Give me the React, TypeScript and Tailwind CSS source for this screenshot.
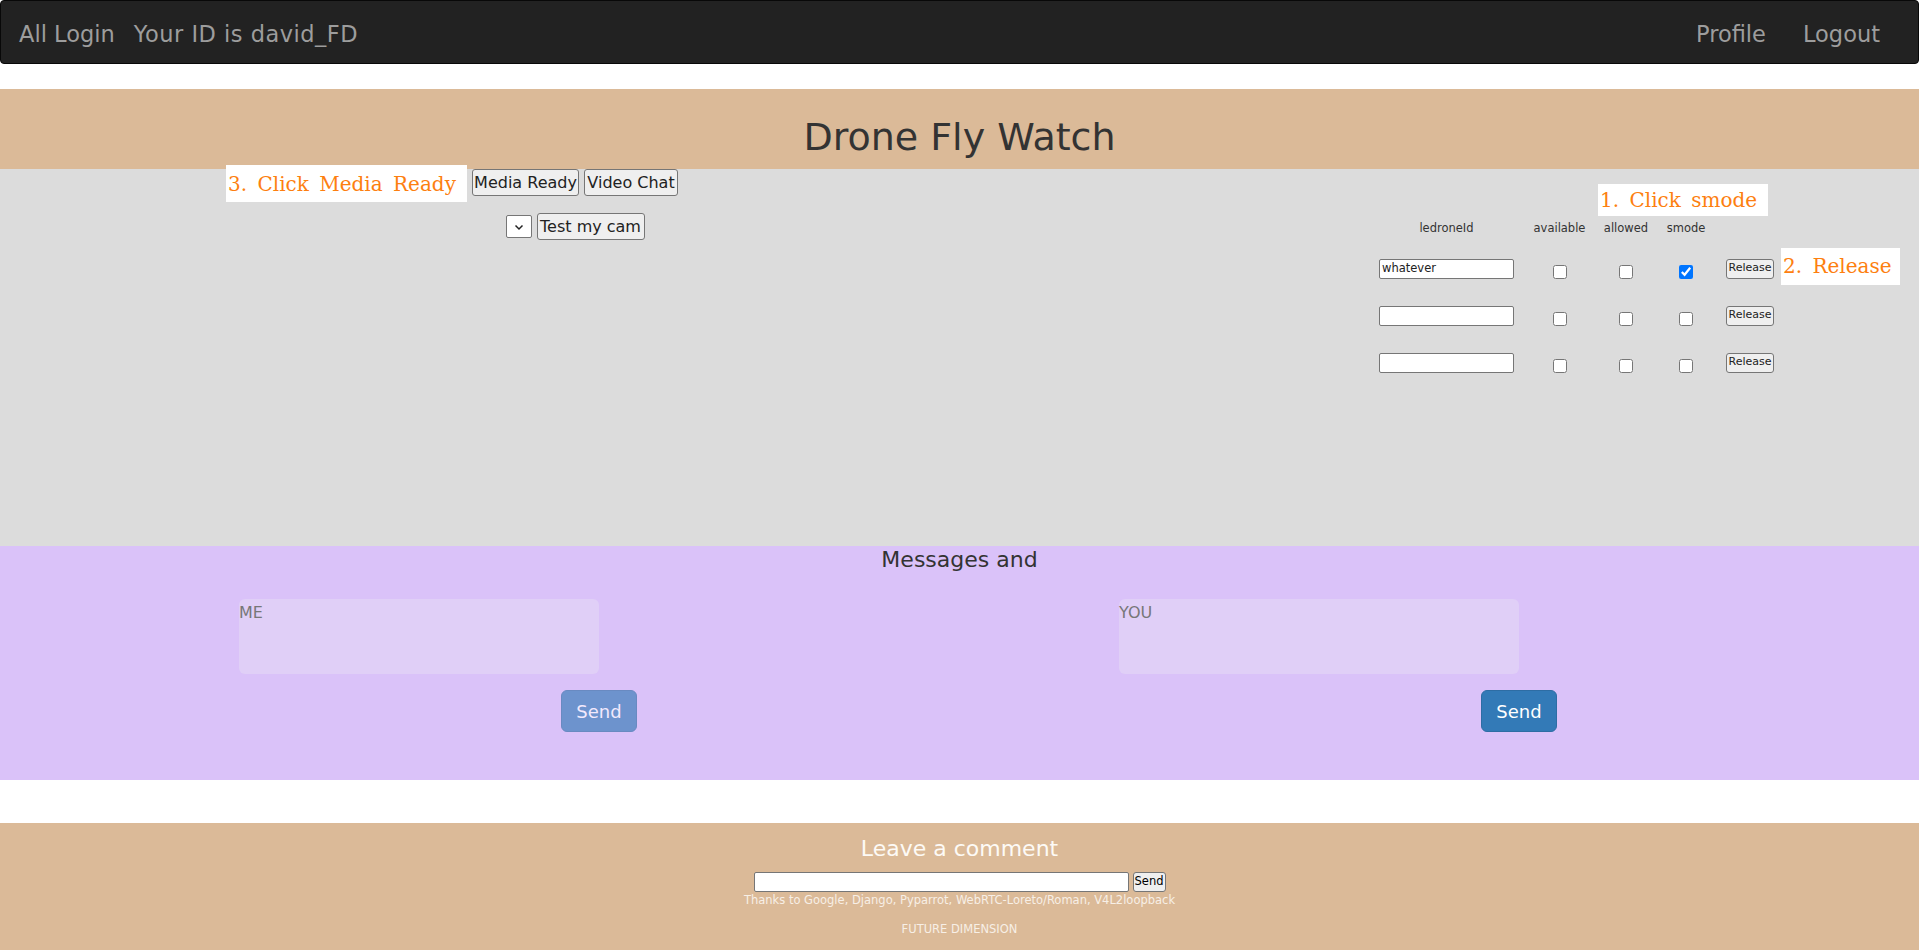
import React from "react";

const annotation =
    "font-['DejaVu_Serif',serif] text-[20px] text-[#fd7f10] [word-spacing:4px] bg-white flex items-center pl-[2px] whitespace-nowrap";

const grayBtn =
    "bg-[#efefef] border border-[#767676] rounded-[3px] text-[#222] flex items-center justify-center";

function Chevron() {
    return (
        <svg className="w-[12px] h-[12px]" viewBox="0 0 12 12" fill="none" stroke="#222" strokeWidth="1.5">
            <polyline points="2.5 4.5 6 8 9.5 4.5" />
        </svg>
    );
}

function DroneRow({ id, smode, note }: { id: string; smode?: boolean; note?: boolean }) {
    return (
        <div className="grid grid-cols-[145px_81px_52px_68px_60px] h-[47px] items-center">
            <div className="flex justify-center">
                <div className="w-[135px] h-[20px] bg-white border border-[#767676] rounded-[2px] text-[11.5px] text-[#222] pl-[2px] flex items-center">
                    {id}
                </div>
            </div>
            <div className="flex justify-center mt-[7px]">
                <input type="checkbox" readOnly className="w-[14px] h-[14px]" />
            </div>
            <div className="flex justify-center mt-[7px]">
                <input type="checkbox" readOnly className="w-[14px] h-[14px]" />
            </div>
            <div className="flex justify-center mt-[7px]">
                <input type="checkbox" readOnly checked={!!smode} className="w-[14px] h-[14px]" />
            </div>
            <div className="flex">
                <div className="relative ml-[6px]">
                    <button className={`${grayBtn} w-[48px] h-[20px] text-[11px]`}>Release</button>
                    {note && (
                        <div className={`${annotation} absolute left-full top-[-11px] ml-[7px] w-[119px] h-[37px]`}>
                            2. Release
                        </div>
                    )}
                </div>
            </div>
        </div>
    );
}

export default function App() {
    return (
        <div className="min-h-screen bg-white font-['DejaVu_Sans',Verdana,sans-serif] text-[#333]">
            {/* Navbar */}
            <nav className="h-[64px] pt-[5px] bg-[#222] border border-[#080808] rounded-[4px] flex items-center text-[22.5px] text-[#9d9d9d]">
                <span className="ml-[18px]">All Login</span>
                <span className="ml-[19px] tracking-[0.5px]">Your ID is david_FD</span>
                <div className="ml-auto flex">
                    <span>Profile</span>
                    <span className="ml-[37px] mr-[38px]">Logout</span>
                </div>
            </nav>

            {/* Title */}
            <div className="mt-[25px] h-[80px] bg-[#dbba98] pt-[29px] text-center text-[38px] leading-[38px] text-[#333]">
                Drone Fly Watch
            </div>

            {/* Control area */}
            <div className="h-[377px] bg-[#dcdcdc] flex">
                <div className="w-[1150px] flex flex-col items-center">
                    <div className="relative flex gap-[5px]">
                        <div className={`${annotation} absolute right-full mr-[5px] top-[-4px] w-[241px] h-[37px]`}>
                            3. Click Media Ready
                        </div>
                        <button className={`${grayBtn} w-[107px] h-[27px] text-[16px]`}>Media Ready</button>
                        <button className={`${grayBtn} w-[94px] h-[27px] text-[16px]`}>Video Chat</button>
                    </div>
                    <div className="mt-[17px] flex items-center gap-[5px]">
                        <div className="w-[26px] h-[23px] bg-white border border-[#767676] rounded-[2px] flex items-center justify-center">
                            <Chevron />
                        </div>
                        <button className={`${grayBtn} w-[108px] h-[27px] text-[16px]`}>Test my cam</button>
                    </div>
                </div>

                <div className="ml-[224px] flex flex-col">
                    <div className={`${annotation} mt-[15px] ml-[224px] w-[170px] h-[32px]`}>1. Click smode</div>
                    <div className="grid grid-cols-[145px_81px_52px_68px_60px] h-[26px] items-center text-[11.5px] text-center text-[#333]">
                        <span>ledroneId</span>
                        <span>available</span>
                        <span>allowed</span>
                        <span>smode</span>
                        <span />
                    </div>
                    <div className="mt-[3px]">
                        <DroneRow id="whatever" smode note />
                        <DroneRow id="" />
                        <DroneRow id="" />
                    </div>
                </div>
            </div>

            {/* Messages */}
            <div className="h-[234px] bg-[#dac2f9] pt-[1px]">
                <div className="text-center text-[22px] leading-[26px] text-[#333]">Messages and</div>
                <div className="mt-[26px] flex pl-[239px]">
                    <div className="w-[398px] flex flex-col">
                        <div className="w-[360px] h-[75px] bg-[#e0cff7] rounded-[6px] pt-[4px] text-[16px] leading-[20px] text-[#777]">
                            ME
                        </div>
                        <button className="self-end mt-[16px] w-[76px] h-[42px] rounded-[6px] bg-[#337ab7] opacity-65 border border-[#2e6da4] text-white text-[18px]">
                            Send
                        </button>
                    </div>
                    <div className="ml-[482px] w-[438px] flex flex-col">
                        <div className="w-[400px] h-[75px] bg-[#e0cff7] rounded-[6px] pt-[4px] text-[16px] leading-[20px] text-[#777]">
                            YOU
                        </div>
                        <button className="self-end mt-[16px] w-[76px] h-[42px] rounded-[6px] bg-[#337ab7] border border-[#2e6da4] text-white text-[18px]">
                            Send
                        </button>
                    </div>
                </div>
            </div>

            {/* Footer */}
            <footer className="mt-[43px] h-[127px] bg-[#dbba98] pt-[13px] flex flex-col items-center">
                <div className="text-[22px] leading-[26px] text-[#fdfaf6]">Leave a comment</div>
                <div className="mt-[10px] flex gap-[4px]">
                    <div className="w-[375px] h-[20px] bg-white border border-[#767676] rounded-[2px]" />
                    <button className={`${grayBtn} w-[33px] h-[20px] text-[11.5px] text-black`}>Send</button>
                </div>
                <div className="mt-[1px] text-[11.5px] leading-[14px] text-[#f7efe6]">
                    Thanks to Google, Django, Pyparrot, WebRTC-Loreto/Roman, V4L2loopback
                </div>
                <div className="mt-[15px] text-[11.5px] leading-[14px] text-[#f7efe6]">FUTURE DIMENSION</div>
            </footer>
        </div>
    );
}
